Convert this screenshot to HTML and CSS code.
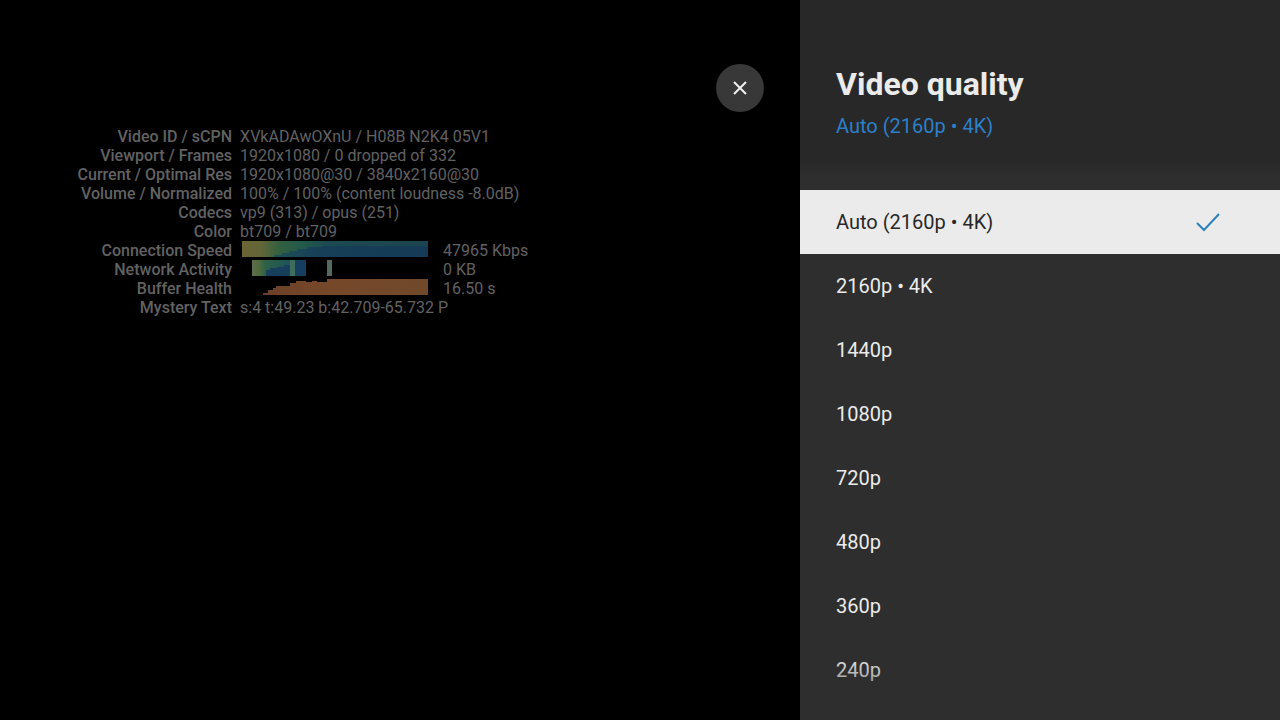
FILE: index.html
```html
<!DOCTYPE html>
<html lang="en">
	<head>
		<meta charset="utf-8" />
		<meta name="viewport" content="width=device-width, initial-scale=1" />
		<title>Video quality</title>
		<link rel="stylesheet" href="styles.css">
	</head>
	<body>
		<main class="player">
			<dl class="stats">
				<dt>Video ID / sCPN</dt>
				<dd>XVkADAwOXnU / H08B N2K4 05V1</dd>
				<dt>Viewport / Frames</dt>
				<dd>1920x1080 / 0 dropped of 332</dd>
				<dt>Current / Optimal Res</dt>
				<dd>1920x1080@30 / 3840x2160@30</dd>
				<dt>Volume / Normalized</dt>
				<dd>100% / 100% (content loudness -8.0dB)</dd>
				<dt>Codecs</dt>
				<dd>vp9 (313) / opus (251)</dd>
				<dt>Color</dt>
				<dd>bt709 / bt709</dd>
				<dt>Connection Speed</dt>
				<dd class="graph-row">
					<svg class="graph" viewBox="0 0 188 16" aria-hidden="true">
						<defs>
							<linearGradient id="speed-top">
								<stop offset="0" stop-color="#6b6434" />
								<stop offset="0.1" stop-color="#636638" />
								<stop offset="0.2" stop-color="#33603f" />
								<stop offset="0.32" stop-color="#235a4a" />
								<stop offset="0.45" stop-color="#1d4a50" />
								<stop offset="1" stop-color="#1c4450" />
							</linearGradient>
							<linearGradient id="speed-low">
								<stop offset="0" stop-color="#1f5055" />
								<stop offset="0.3" stop-color="#173f58" />
								<stop offset="1" stop-color="#143a55" />
							</linearGradient>
						</defs>
						<path fill="url(#speed-top)" d="M2 0h186v16H2z" />
						<path fill="url(#speed-low)" d="M34 16v-2h8v-2h7v-2h8V8h10V6h15V5h106v11z" />
					</svg>
					<span>47965 Kbps</span>
				</dd>
				<dt>Network Activity</dt>
				<dd class="graph-row">
					<svg class="graph" viewBox="0 0 188 16" aria-hidden="true">
						<defs>
							<linearGradient id="network">
								<stop offset="0" stop-color="#5d6e4c" />
								<stop offset="0.2" stop-color="#4e6b3e" />
								<stop offset="0.35" stop-color="#2d6146" />
								<stop offset="1" stop-color="#1d535a" />
							</linearGradient>
						</defs>
						<path fill="url(#network)" d="M12 0h38v16H12z" />
						<path fill="#173f5c" d="M26 16v-6h4V8h7V7h7V5h6v11z" />
						<path fill="#3f6d5b" d="M50 0h5v16h-5z" />
						<path fill="#153e60" d="M55 0h11v16H55z" />
						<path fill="#546a5c" d="M87 0h5v16h-5z" />
					</svg>
					<span>0 KB</span>
				</dd>
				<dt>Buffer Health</dt>
				<dd class="graph-row">
					<svg class="graph" viewBox="0 0 188 16" aria-hidden="true">
						<defs>
							<linearGradient id="buffer">
								<stop offset="0" stop-color="#6c4028" />
								<stop offset="0.4" stop-color="#76482a" />
								<stop offset="1" stop-color="#70492a" />
							</linearGradient>
						</defs>
						<path fill="url(#buffer)" d="M23 16v-2h5v-3h5V9h3V7h14V4h6V2h10v1h6v-1h5v1h10V0h101v16z" />
					</svg>
					<span>16.50 s</span>
				</dd>
				<dt>Mystery Text</dt>
				<dd>s:4 t:49.23 b:42.709-65.732 P</dd>
			</dl>
			<button class="close" type="button" aria-label="Close">
				<svg viewBox="0 0 24 24" width="24" height="24" aria-hidden="true">
					<path d="M6 6l12 12M18 6L6 18" />
				</svg>
			</button>
		</main>
		<aside class="panel">
			<header class="panel-header">
				<h1 class="title">Video quality</h1>
				<p class="current">Auto (2160p • 4K)</p>
			</header>
			<div class="options">
				<button class="option selected" type="button">
					<span>Auto (2160p • 4K)</span>
					<svg class="check" viewBox="0 0 32 32" width="32" height="32" aria-hidden="true">
						<path d="M5 17l7 7L27 8" />
					</svg>
				</button>
				<button class="option" type="button">2160p • 4K</button>
				<button class="option" type="button">1440p</button>
				<button class="option" type="button">1080p</button>
				<button class="option" type="button">720p</button>
				<button class="option" type="button">480p</button>
				<button class="option" type="button">360p</button>
				<button class="option" type="button">240p</button>
			</div>
		</aside>
	</body>
</html>
```

FILE: styles.css
```css
* {
	box-sizing: border-box;
}

body {
	display: grid;
	grid-template-columns: 5fr 3fr;
	min-height: 100vh;
	margin: 0;
	background-color: #000;
	color: #ebebeb;
	font-family: Roboto, "Liberation Sans", sans-serif;
}

button {
	border: none;
	font: inherit;
	cursor: pointer;
}

.player {
	display: flex;
	justify-content: space-between;
	align-items: flex-start;
	padding: 64px 36px;
}

.stats {
	display: grid;
	grid-template-columns: 196px auto;
	column-gap: 8px;
	margin: 63px 0 0;
	color: #626262;
	font-size: 16px;
	line-height: 19px;
	white-space: nowrap;
}

.stats dt {
	font-weight: 500;
	text-align: right;
}

.stats dd {
	margin: 0;
}

.graph-row {
	display: flex;
	align-items: flex-start;
	gap: 15px;
}

.graph {
	width: 188px;
	height: 16px;
}

.close {
	display: flex;
	justify-content: center;
	align-items: center;
	width: 48px;
	height: 48px;
	padding: 0;
	border-radius: 50%;
	background-color: #383838;
}

.close path {
	fill: none;
	stroke: #f1f1f1;
	stroke-width: 2;
}

.panel {
	position: relative;
	height: 100vh;
	overflow: hidden;
	background-color: #2e2e2e;
}

.panel-header {
	padding: 64px 36px 36px;
	background: linear-gradient(#282828 92%, #2e2e2e);
}

.title {
	margin: 0;
	font-size: 32px;
	line-height: 40px;
	font-weight: 700;
}

.current {
	margin: 8px 0 0;
	color: #2c80c9;
	font-size: 20px;
	line-height: 28px;
}

.options {
	padding-top: 14px;
}

.option {
	display: flex;
	justify-content: space-between;
	align-items: center;
	width: 100%;
	height: 64px;
	padding: 0 56px 0 36px;
	background: none;
	color: #ebebeb;
	font-size: 20px;
	text-align: left;
}

.selected {
	background-color: #ebebeb;
	color: #282828;
}

.check path {
	fill: none;
	stroke: #2c80bd;
	stroke-width: 2;
}

/* fades out the options that run past the bottom edge */
.panel::after {
	content: "";
	position: absolute;
	right: 0;
	bottom: 0;
	left: 0;
	height: 64px;
	background: linear-gradient(rgba(46, 46, 46, 0), #2e2e2e);
	pointer-events: none;
}
```
